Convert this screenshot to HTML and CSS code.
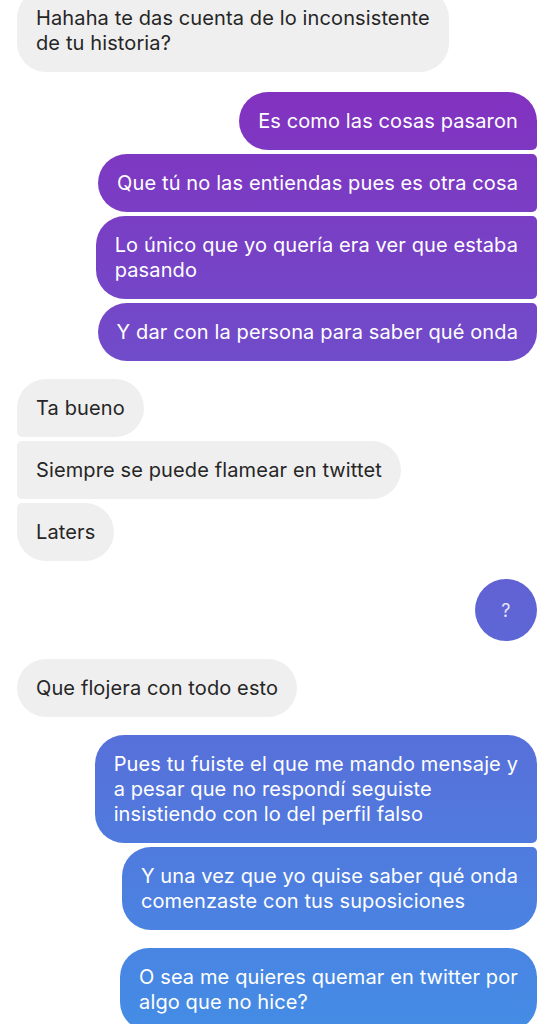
FILE: index.html
```html
<!DOCTYPE html>
<html lang="es">
<head>
    <meta charset="UTF-8">
    <meta name="viewport" content="width=device-width, initial-scale=1.0">
    <title>Mensajes</title>
    <link rel="stylesheet" href="styles.css">
</head>
<body>
    <main class="thread">
        <div class="group them">
            <p class="bubble">Hahaha te das cuenta de lo inconsistente<br>de tu historia?</p>
        </div>

        <div class="group me first-reply">
            <p class="bubble">Es como las cosas pasaron</p>
            <p class="bubble">Que tú no las entiendas pues es otra cosa</p>
            <p class="bubble">Lo único que yo quería era ver que estaba<br>pasando</p>
            <p class="bubble">Y dar con la persona para saber qué onda</p>
        </div>

        <div class="group them">
            <p class="bubble">Ta bueno</p>
            <p class="bubble">Siempre se puede flamear en twittet</p>
            <p class="bubble">Laters</p>
        </div>

        <div class="group me">
            <p class="bubble round">?</p>
        </div>

        <div class="group them">
            <p class="bubble">Que flojera con todo esto</p>
        </div>

        <div class="group me">
            <p class="bubble">Pues tu fuiste el que me mando mensaje y<br>a pesar que no respondí seguiste<br>insistiendo con lo del perfil falso</p>
            <p class="bubble">Y una vez que yo quise saber qué onda<br>comenzaste con tus suposiciones</p>
        </div>

        <div class="group me">
            <p class="bubble">O sea me quieres quemar en twitter por<br>algo que no hice?</p>
        </div>
    </main>
</body>
</html>
```

FILE: styles.css
```css
body {
    margin: 0;
    padding: 0;
    background-color: #fff;
    font-family: 'Inter', 'Liberation Sans', sans-serif;
    overflow: hidden;
}

.thread {
    display: flex;
    flex-direction: column;
    gap: 18px;
    padding: 0 11px 0 17px;
    margin-top: -11px;
}

.group {
    display: flex;
    flex-direction: column;
    gap: 4px;
}

.group.first-reply {
    margin-top: 2px;
}

.group.them {
    align-items: flex-start;
}

.group.me {
    align-items: flex-end;
}

.bubble {
    margin: 0;
    padding: 16.5px 19px;
    font-size: 20px;
    letter-spacing: 0.12px;
    line-height: 25px;
    border-radius: 29px;
    white-space: nowrap;
}

.them .bubble {
    background-color: #efefef;
    color: #262626;
}

/* gradient stays put on the screen, so each bubble picks up its own slice */
.me .bubble {
    color: #fff;
    background: linear-gradient(180deg, #8829bc 0, #448ce5 1024px) fixed;
}

/* grouped corners */
.them .bubble:not(:last-child) {
    border-bottom-left-radius: 5px;
}

.them .bubble:not(:first-child) {
    border-top-left-radius: 5px;
}

.me .bubble:not(:last-child) {
    border-bottom-right-radius: 5px;
}

.me .bubble:not(:first-child) {
    border-top-right-radius: 5px;
}

.bubble.round {
    width: 62px;
    height: 62px;
    padding: 0;
    border-radius: 50%;
    display: flex;
    align-items: center;
    justify-content: center;
    color: rgba(255, 255, 255, 0.85);
    font-size: 18px;
}
```
